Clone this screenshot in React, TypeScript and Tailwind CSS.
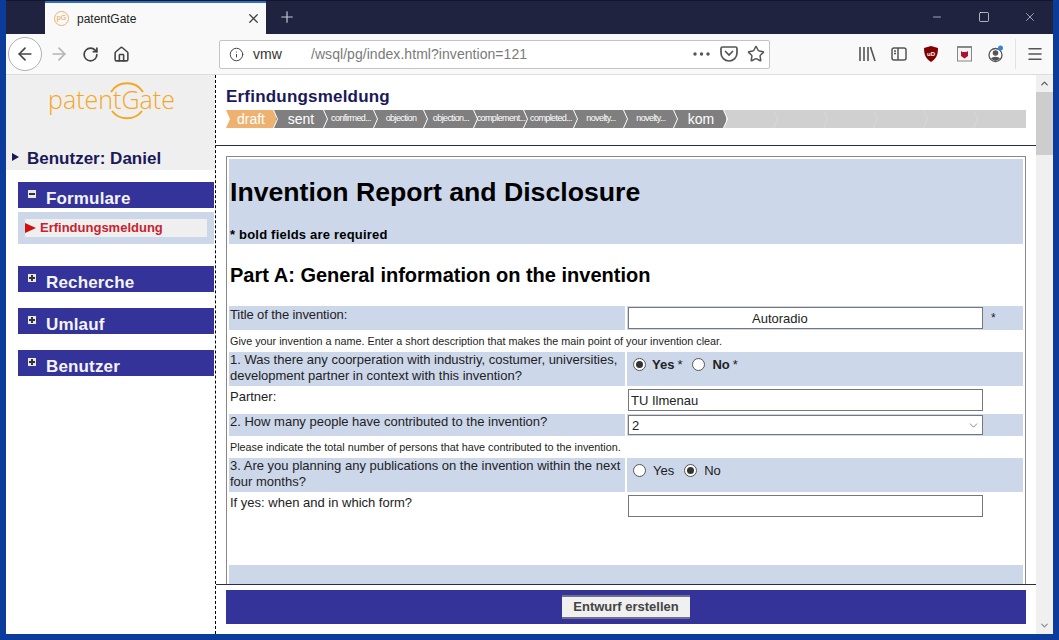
import React from "react";
import { ArrowLeft, ArrowRight, RotateCw, Home, Info, Star, X, Plus, Minus, Square, Menu, ChevronDown, ChevronUp } from "lucide-react";

const steps = [
  { label: "draft", big: true, color: "#edb26f" },
  { label: "sent", big: true, color: "#7f7f7f" },
  { label: "confirmed...", color: "#7f7f7f" },
  { label: "objection", color: "#7f7f7f" },
  { label: "objection...", color: "#7f7f7f" },
  { label: "complement...", color: "#7f7f7f" },
  { label: "completed...", color: "#7f7f7f" },
  { label: "novelty...", color: "#7f7f7f" },
  { label: "novelty...", color: "#7f7f7f" },
  { label: "kom", big: true, color: "#7f7f7f" },
  { label: "", color: "#d0d0d0" },
  { label: "", color: "#d0d0d0" },
  { label: "", color: "#d0d0d0" },
  { label: "", color: "#d0d0d0" },
  { label: "", color: "#d0d0d0" },
  { label: "", color: "#d0d0d0" },
];

function Stepper() {
  return (
    <div className="flex h-[18px] w-[800px] bg-[#d0d0d0]">
      {steps.map((s, i) => {
        const next = steps[i + 1]?.color;
        const line = s.label === "" ? "#d8d8d8" : "#ffffff";
        return (
          <div key={i} className="relative flex h-[18px] w-[50px] items-center justify-center" style={{ background: s.color }}>
            {i === 0 && (
              <svg className="absolute left-0 top-0" width="5" height="18">
                <polygon points="0,0 4,9 0,18" fill="#fff" />
              </svg>
            )}
            <span className={s.big ? "relative z-20 text-[14px] text-white" : "relative z-20 whitespace-nowrap text-[9px] tracking-[-0.6px] text-white"}>
              {s.label}
            </span>
            {next && (
              <svg className="absolute right-[-3px] top-0 z-10" width="6" height="18">
                <polygon points="0.500,0 6,0 6,18 0.500,18 4.500,9" fill={next} />
                <polyline points="0.500,0 4.500,9 0.500,18" fill="none" stroke={line} strokeWidth="1" />
              </svg>
            )}
          </div>
        );
      })}
    </div>
  );
}

function Tree({ open }: { open?: boolean }) {
  return (
    <svg width="8" height="8" viewBox="0 0 8 8" className="mt-[-3px] shrink-0">
      <rect width="8" height="8" fill="#e8e8e8" />
      <rect x="1" y="3" width="6" height="2" fill="#333" />
      {!open && <rect x="3" y="1" width="2" height="6" fill="#333" />}
    </svg>
  );
}

function NavBar({ label, open }: { label: string; open?: boolean }) {
  return (
    <div className="flex h-[26px] items-center bg-[#333399] pl-[10px]">
      <Tree open={open} />
      <span className="ml-[10px] mt-[7px] text-[17px] font-bold tracking-[0.15px] text-[#f4f4f8]">{label}</span>
    </div>
  );
}

function Radio({ checked }: { checked?: boolean }) {
  return (
    <span className="flex h-[13px] w-[13px] shrink-0 items-center justify-center rounded-full border border-[#555] bg-white">
      {checked && <span className="h-[7px] w-[7px] rounded-full bg-[#333]" />}
    </span>
  );
}

function Row({ h, left, right, blue = true }: { h: string; left: React.ReactNode; right?: React.ReactNode; blue?: boolean }) {
  return (
    <div className={`grid grid-cols-[396px_396px] gap-x-[2px] ${h}`}>
      <div className={`px-[1px] text-[13px] leading-[16px] text-[#222] ${blue ? "bg-[#cdd7ea]" : "pt-[3px]"}`}>{left}</div>
      <div className={`flex items-start pl-[1px] ${blue ? "bg-[#cdd7ea]" : ""}`}>{right}</div>
    </div>
  );
}

function Field({ children, h = "h-[22px]" }: { children?: React.ReactNode; h?: string }) {
  return (
    <div className={`flex w-[355px] items-center border border-[#777] bg-white px-[2px] pt-[1px] text-[13px] text-[#222] ${h}`}>
      {children}
    </div>
  );
}

function Help({ children, h }: { children: React.ReactNode; h: string }) {
  return <div className={`flex items-center px-[1px] text-[10.8px] text-[#222] ${h}`}>{children}</div>;
}

export default function App() {
  return (
    <div className="flex h-[640px] w-[1059px] flex-col overflow-hidden bg-[#0b3c9c] px-[6px] pb-[6px] font-['Liberation_Sans',Arial,sans-serif]">
      {/* title bar */}
      <div className="flex h-[34px] shrink-0 items-stretch border-t border-[#12152c] bg-[#1f2340]">
        <div className="ml-[39px] flex w-[221px] items-center border-t-2 border-[#2f6fc0] bg-[#f9f9fa] pl-[9px] pr-[5px]">
          <span className="flex h-[15px] w-[15px] items-center justify-center rounded-full border border-[#edb26f] text-[7px] text-[#e0a040]">pG</span>
          <span className="ml-[8px] flex-1 text-[12px] text-[#222]">patentGate</span>
          <X size={15} strokeWidth={2} className="text-[#444]" />
        </div>
        <div className="ml-[12px] flex items-center pb-[2px]">
          <Plus size={18} strokeWidth={1.6} className="text-[#c8c8d0]" />
        </div>
        <div className="ml-auto flex items-center pb-[2px]">
          <div className="flex w-[47px] justify-center"><Minus size={12} strokeWidth={1.2} className="text-white" /></div>
          <div className="flex w-[47px] justify-center"><Square size={12} strokeWidth={1.3} className="text-white" /></div>
          <div className="flex w-[46px] justify-center"><X size={14} strokeWidth={1} className="text-white" /></div>
        </div>
      </div>

      {/* toolbar */}
      <div className="flex h-[41px] shrink-0 items-center border-b border-[#ddd] bg-[#f9f9fa] text-[#444]">
        <div className="ml-[2px] flex h-[34px] w-[34px] items-center justify-center rounded-full border border-[#b1b1b3] bg-white">
          <ArrowLeft size={20} strokeWidth={2} />
        </div>
        <ArrowRight size={20} strokeWidth={2} className="ml-[7px] text-[#b4b4b6]" />
        <RotateCw size={17} strokeWidth={2.4} className="ml-[13px]" />
        <Home size={17} strokeWidth={2.2} className="ml-[14px]" />
        <div className="ml-[89px] flex h-[29px] w-[551px] items-center rounded-[2px] border border-[#c4c4c4] bg-white pl-[9px] pr-[4px]">
          <Info size={15} strokeWidth={1.6} />
          <span className="ml-[9px] w-[58px] text-[14px] text-[#333]">vmw</span>
          <span className="text-[14px] tracking-[0.05px] text-[#7a7a7a]">/wsql/pg/index.html?invention=121</span>
          <svg width="18" height="4" className="ml-auto mr-[5px]" fill="#555">
            <circle cx="2" cy="2" r="1.7" /><circle cx="8.5" cy="2" r="1.7" /><circle cx="15" cy="2" r="1.7" />
          </svg>
          <svg width="18" height="16" viewBox="0 0 18 16" fill="none" stroke="#555" strokeWidth="1.7" className="ml-[4px]">
            <path d="M2.5 1h13a1.5 1.5 0 0 1 1.5 1.5V7a8 8 0 0 1-16 0V2.500A1.500 1.500 0 0 1 2.500 1z" />
            <path d="M5.500 5.500 9 9l3.500-3.500" strokeLinecap="round" />
          </svg>
          <Star size={18} strokeWidth={2} className="ml-[9px] text-[#555]" />
        </div>
        <svg width="18" height="16" viewBox="0 0 18 16" fill="none" stroke="#555" strokeWidth="1.600" className="ml-[88px]">
          <path d="M2 1v14M6 1v14M10 1v14M12.500 1l4.500 14" />
        </svg>
        <svg width="16" height="14" viewBox="0 0 16 14" fill="none" stroke="#555" strokeWidth="1.500" className="ml-[15px]">
          <rect x="1" y="1" width="14" height="12" rx="2" />
          <path d="M7 1v12M3 4h2M3 6.500h2" />
        </svg>
        <svg width="14" height="16" viewBox="0 0 14 16" className="ml-[17px]">
          <path d="M7 0 14 2c0 7-2 11-7 14C2 13 0 9 0 2z" fill="#800000" />
          <text x="7" y="9.500" textAnchor="middle" fontSize="6" fontWeight="700" fill="#fff">uD</text>
        </svg>
        <svg width="15" height="16" viewBox="0 0 15 16" className="ml-[19px]">
          <rect x="0.500" y="1" width="14" height="14" fill="#f4f4f4" stroke="#888" />
          <rect x="0" y="0" width="15" height="2" fill="#888" />
          <path d="M4 5l1.500 1h4L11 5v5l-3.500 2.500L4 10z" fill="#b01030" />
        </svg>
        <svg width="16" height="18" viewBox="0 0 16 18" className="ml-[16px]">
          <circle cx="7.500" cy="10" r="6.500" fill="#fff" stroke="#555" strokeWidth="1.300" />
          <circle cx="7.500" cy="8" r="2.800" fill="#555" />
          <path d="M3 14c1-3 8-3 9 0l-4.500 2z" fill="#555" />
          <circle cx="12.500" cy="3" r="2.500" fill="#2f86e0" />
        </svg>
        <div className="ml-[11px] h-[30px] w-px bg-[#e2e2e2]" />
        <Menu size={18} strokeWidth={2} className="ml-[10px] text-[#555]" />
      </div>

      {/* page */}
      <div className="flex min-h-0 flex-1 bg-white">
        <aside className="flex w-[210px] shrink-0 flex-col border-r border-dashed border-black">
          <div className="h-[95px] shrink-0 bg-[#efefef]">
            <div className="relative flex h-[50px] items-start justify-center pl-[2px] pt-[9px]">
              <span className="font-['Open_Sans',sans-serif] text-[25px] font-light leading-[30px] text-[#f5a623]">patentGate</span>
              <svg width="44" height="44" viewBox="0 0 44 44" fill="none" stroke="#f5a623" strokeWidth="2" className="absolute left-[99px] top-[4px]">
                <path d="M6 13a19 19 0 0 1 32 0M7 32a19 19 0 0 0 30 0" />
              </svg>
            </div>
            <div className="mt-[21px] flex items-center pl-[6px]">
              <svg width="8" height="8" viewBox="0 0 8 8" className="mt-[-4px]"><polygon points="0,0 7,4 0,8" fill="#1a1a5a" /></svg>
              <span className="ml-[7px] text-[17px] font-bold text-[#1a1a5a]">Benutzer: Daniel</span>
            </div>
          </div>
          <nav className="ml-[12px] mr-[1px] mt-[12px] flex flex-col">
            <NavBar label="Formulare" open />
            <div className="mt-[4px] h-[32px] bg-[#cdd7ea] px-[7px] py-[7px]">
              <div className="flex h-[18px] items-center bg-[#efefef]">
                <svg width="11" height="10" viewBox="0 0 11 10"><polygon points="0,0 11,5 0,10" fill="#d01010" /></svg>
                <span className="ml-[4px] text-[13px] font-bold text-[#c8232f]">Erfindungsmeldung</span>
              </div>
            </div>
            <div className="mt-[22px]"><NavBar label="Recherche" /></div>
            <div className="mt-[16px]"><NavBar label="Umlauf" /></div>
            <div className="mt-[16px]"><NavBar label="Benutzer" /></div>
          </nav>
        </aside>

        <main className="flex min-w-0 flex-1 flex-col">
          <div className="h-[71px] shrink-0 border-b border-[#2a2a4a] pl-[10px] pt-[12px]">
            <h2 className="text-[17px] font-bold leading-[20px] tracking-[0.2px] text-[#1a1a5a]">Erfindungsmeldung</h2>
            <div className="mt-[3px]"><Stepper /></div>
          </div>
          <div className="min-h-0 flex-1 overflow-hidden pl-[10px] pt-[10px]">
            <div className="h-[500px] w-[800px] border border-[#888] px-[2px] pt-[2px]">
              <div className="h-[85px] bg-[#cdd7ea] px-[1px] pt-[17px]">
                <h1 className="text-[26.67px] font-bold leading-[32px] text-black">Invention Report and Disclosure</h1>
                <p className="mt-[19px] text-[13px] font-bold leading-[15px] tracking-[0.2px] text-black">* bold fields are required</p>
              </div>
              <h3 className="h-[62px] px-[1px] pt-[19px] text-[20px] font-bold leading-[24px] text-black">Part A: General information on the invention</h3>

              <Row
                h="h-[24px]"
                left={<span className="relative top-[1px] tracking-[-0.1px]">Title of the invention:</span>}
                right={
                  <div className="flex items-start">
                    <div className="mt-[1px]"><Field><span className="ml-[121px]">Autoradio</span></Field></div>
                    <span className="ml-[8px] mt-[3px] text-[12px] text-[#222]">*</span>
                  </div>
                }
              />
              <Help h="h-[22px]">Give your invention a name. Enter a short description that makes the main point of your invention clear.</Help>
              <Row
                h="h-[34px]"
                left={<>1. Was there any coorperation with industriy, costumer, universities, development partner in context with this invention?</>}
                right={
                  <div className="ml-[5px] mt-[3px] flex items-center text-[13px] text-[#222]">
                    <Radio checked />
                    <b className="ml-[6px]">Yes</b><span className="ml-[3px]">*</span>
                    <span className="ml-[10px]"><Radio /></span>
                    <b className="ml-[7px]">No</b><span className="ml-[3px]">*</span>
                  </div>
                }
              />
              <Row h="h-[28px]" blue={false} left="Partner:" right={<div className="mt-[3px]"><Field>TU Ilmenau</Field></div>} />
              <Row
                h="h-[22px]"
                left="2. How many people have contributed to the invention?"
                right={
                  <div className="mt-[1px]">
                    <Field h="h-[20px]">
                      <span className="flex-1 pl-[1px]">2</span>
                      <ChevronDown size={13} strokeWidth={1.300} className="text-[#555]" />
                    </Field>
                  </div>
                }
              />
              <Help h="h-[22px]">Please indicate the total number of persons that have contributed to the invention.</Help>
              <Row
                h="h-[34px]"
                left={<>3. Are you planning any publications on the invention within the next four months?</>}
                right={
                  <div className="ml-[5px] mt-[3px] flex items-center text-[13px] text-[#222]">
                    <Radio />
                    <span className="ml-[7px]">Yes</span>
                    <span className="ml-[10px]"><Radio checked /></span>
                    <span className="ml-[7px]">No</span>
                  </div>
                }
              />
              <Row h="h-[73px]" blue={false} left="If yes: when and in which form?" right={<div className="mt-[3px]"><Field /></div>} />
              <div className="h-[40px] bg-[#cdd7ea]" />
            </div>
          </div>
          <div className="h-[50px] shrink-0 border-t border-[#2a2a5a] px-[10px] pt-[5px]">
            <div className="flex h-[34px] items-center justify-center bg-[#333399]">
              <button className="h-[24px] w-[128px] border-y-2 border-b-[#70708a] border-t-[#70708a] bg-[#f0f0f0] text-[13px] font-bold text-[#444]">
                Entwurf erstellen
              </button>
            </div>
          </div>
        </main>

        <div className="flex w-[17px] shrink-0 flex-col bg-[#f0f0f0]">
          <div className="flex h-[17px] items-center justify-center"><ChevronUp size={11} strokeWidth={2.500} className="text-[#555]" /></div>
          <div className="h-[63px] bg-[#cdcdcd]" />
          <div className="mt-auto flex h-[17px] items-center justify-center"><ChevronDown size={11} strokeWidth={2.500} className="text-[#888]" /></div>
        </div>
      </div>
    </div>
  );
}
